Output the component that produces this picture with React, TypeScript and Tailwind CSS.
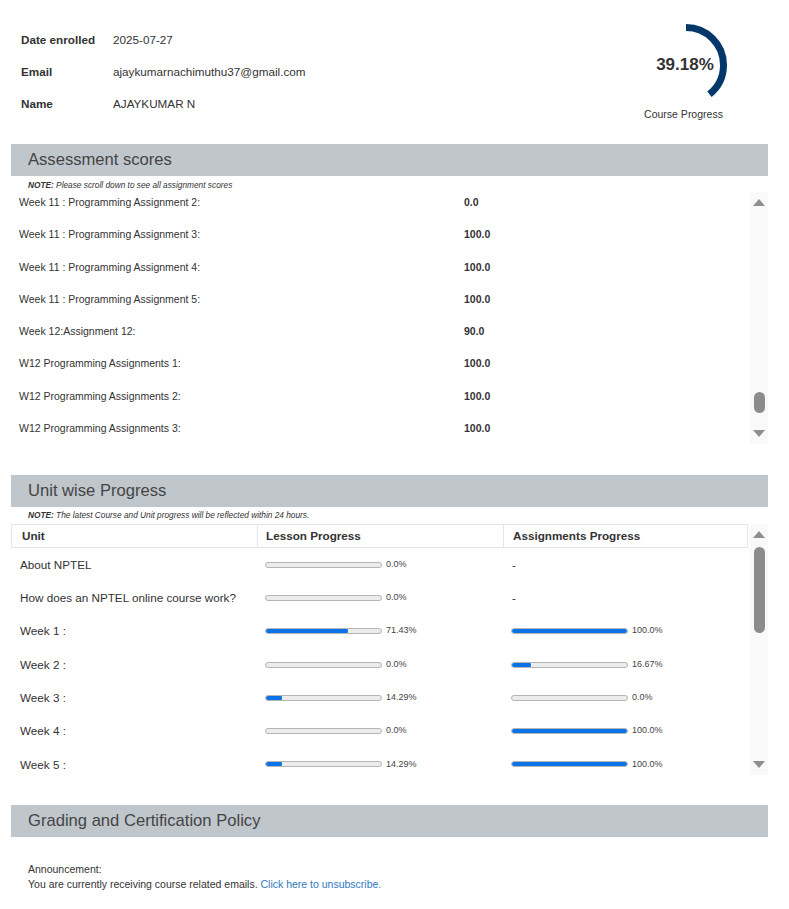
import React from "react";

const scores: [string, string][] = [
  ["Week 11 : Programming Assignment 2:", "0.0"],
  ["Week 11 : Programming Assignment 3:", "100.0"],
  ["Week 11 : Programming Assignment 4:", "100.0"],
  ["Week 11 : Programming Assignment 5:", "100.0"],
  ["Week 12:Assignment 12:", "90.0"],
  ["W12 Programming Assignments 1:", "100.0"],
  ["W12 Programming Assignments 2:", "100.0"],
  ["W12 Programming Assignments 3:", "100.0"],
];

const units: [string, number, number | null][] = [
  ["About NPTEL", 0, null],
  ["How does an NPTEL online course work?", 0, null],
  ["Week 1 :", 71.43, 100],
  ["Week 2 :", 0, 16.67],
  ["Week 3 :", 14.29, 0],
  ["Week 4 :", 0, 100],
  ["Week 5 :", 14.29, 100],
];

function fmt(v: number) {
  return Number.isInteger(v) ? v.toFixed(1) + "%" : v + "%";
}

function Bar({ v }: { v: number }) {
  return (
    <div className="flex items-center">
      <div className="relative h-[6px] w-[117px] overflow-hidden rounded-full border border-[#b5b5b5] bg-[#ececec]">
        <div className="absolute left-0 top-[-1px] h-[6px] rounded-full bg-[#0b72e7]" style={{ width: `${v}%` }} />
      </div>
      <span className="ml-[4px] text-[9px] text-[#444]">{fmt(v)}</span>
    </div>
  );
}

function Scrollbar({ thumbTop, thumbH }: { thumbTop: number; thumbH: number }) {
  return (
    <div className="relative ml-[2px] w-[18px] shrink-0 bg-[#f9f9f9]">
      <div className="absolute left-[3px] top-[7px] h-0 w-0 border-x-[6px] border-b-[7px] border-x-transparent border-b-[#8f8f8f]" />
      <div
        className="absolute left-[4px] w-[11px] rounded-full bg-[#8c8c8c]"
        style={{ top: thumbTop, height: thumbH }}
      />
      <div className="absolute bottom-[7px] left-[3px] h-0 w-0 border-x-[6px] border-t-[7px] border-x-transparent border-t-[#8f8f8f]" />
    </div>
  );
}

function Header({ title }: { title: string }) {
  return (
    <div className="ml-[11px] mr-[21px] flex h-[32px] items-center bg-[#bfc6cc] pl-[17px] text-[16.6px] text-[#454545]">
      {title}
    </div>
  );
}

export default function App() {
  const r = 37.5;
  const c = 2 * Math.PI * r;
  const pct = 39.18;
  return (
    <div className="w-[789px] bg-white text-[#333]" style={{ fontFamily: '"Liberation Sans", Arial, sans-serif' }}>
      {/* top info */}
      <div className="flex h-[144px] items-start justify-between">
        <div className="pl-[21px] pt-[24px] text-[11.7px]">
          {[
            ["Date enrolled", "2025-07-27"],
            ["Email", "ajaykumarnachimuthu37@gmail.com"],
            ["Name", "AJAYKUMAR N"],
          ].map(([k, v]) => (
            <div key={k} className="flex h-[32px] items-center">
              <div className="w-[92px] font-bold text-[#333]">{k}</div>
              <div className="text-[#333]">{v}</div>
            </div>
          ))}
        </div>
        <div className="mr-[43px] mt-[20px] flex w-[120px] flex-col items-center">
          <div className="relative h-[90px] w-[90px]">
            <svg width="90" height="90" viewBox="0 0 90 90" className="absolute left-0 top-0">
              <circle
                cx="45"
                cy="45"
                r={r}
                fill="none"
                stroke="#06376b"
                strokeWidth="7"
                strokeDasharray={`${(c * pct) / 100} ${c}`}
                transform="rotate(-90 45 45)"
              />
            </svg>
            <div className="absolute inset-0 flex items-center justify-center pr-[2px] text-[17px] font-bold text-[#333]">
              39.18%
            </div>
          </div>
          <div className="mt-[-3px] pr-[5px] text-[10.5px] text-[#333]">Course Progress</div>
        </div>
      </div>

      {/* Assessment scores */}
      <Header title="Assessment scores" />
      <div className="ml-[28px] mt-[3px] h-[13px] text-[8.3px] italic leading-[13px] text-[#333]">
        <span className="font-bold">NOTE:</span> Please scroll down to see all assignment scores
      </div>
      <div className="ml-[11px] mr-[21px] flex h-[252px]">
        <div className="flex-1 overflow-hidden text-[10.5px]">
          {scores.map(([l, s]) => (
            <div key={l} className="flex h-[32.3px] items-start pl-[8px] leading-[20px]">
              <div className="w-[445px]">{l}</div>
              <div className="font-bold">{s}</div>
            </div>
          ))}
        </div>
        <Scrollbar thumbTop={200} thumbH={21} />
      </div>

      <div className="h-[31px]" />

      {/* Unit wise Progress */}
      <Header title="Unit wise Progress" />
      <div className="ml-[28px] mt-[2px] h-[15px] text-[8.3px] italic leading-[13px] text-[#333]">
        <span className="font-bold">NOTE:</span> The latest Course and Unit progress will be reflected within 24 hours.
      </div>
      <div className="ml-[11px] mr-[21px] flex h-[251px]">
        <div className="flex-1 overflow-hidden">
          <div className="flex h-[24px] border border-[#e6e6e6] text-[11.7px] font-bold text-[#333]">
            <div className="flex w-[246px] items-center border-r border-[#e6e6e6] pl-[10px]">Unit</div>
            <div className="flex w-[246px] items-center border-r border-[#e6e6e6] pl-[8px]">Lesson Progress</div>
            <div className="flex flex-1 items-center pl-[9px]">Assignments Progress</div>
          </div>
          <div>
            {units.map(([u, l, a]) => (
              <div key={u} className="flex h-[33.3px] items-center text-[11.7px]">
                <div className="w-[246px] pl-[9px]">{u}</div>
                <div className="w-[246px] pl-[8px]">
                  <Bar v={l} />
                </div>
                <div className="flex-1 pl-[8px]">{a === null ? <span className="pl-[1px]">-</span> : <Bar v={a} />}</div>
              </div>
            ))}
          </div>
        </div>
        <Scrollbar thumbTop={23} thumbH={86} />
      </div>

      <div className="h-[30px]" />

      <Header title="Grading and Certification Policy" />
      <div className="pl-[28px] pt-[25px] text-[10.5px] leading-[15px] text-[#333]">
        <div>Announcement:</div>
        <div>
          You are currently receiving course related emails.{" "}
          <span className="text-[#2f78c0]">Click here to unsubscribe.</span>
        </div>
      </div>
      <div className="h-[18px]" />
    </div>
  );
}
